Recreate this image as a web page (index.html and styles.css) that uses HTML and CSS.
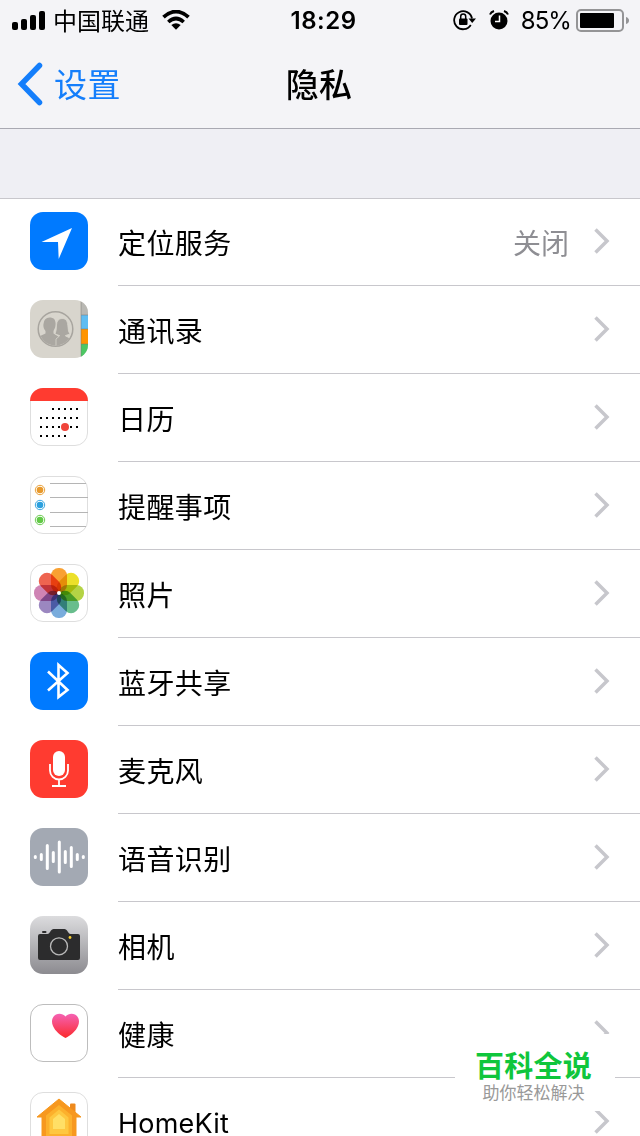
FILE: index.html
```html
<!DOCTYPE html>
<html lang="zh-CN">
<head>
  <meta charset="UTF-8">
  <meta name="viewport" content="width=device-width, initial-scale=1.0">
  <title>隐私</title>
  <link rel="stylesheet" href="styles.css">
</head>
<body>
<!-- Header: status bar + navigation -->
<header class="header">
  <div class="status-bar">
    <div class="status-left">
      <svg class="signal" width="34" height="22" viewBox="0 0 34 22">
        <rect x="0" y="13" width="6" height="8" rx="2"/>
        <rect x="9" y="10" width="6" height="11" rx="2"/>
        <rect x="18" y="6" width="6" height="15" rx="2"/>
        <rect x="27" y="2" width="6" height="19" rx="2"/>
      </svg>
      <span class="carrier">中国联通</span>
      <svg class="wifi" width="28" height="20" viewBox="0 0 28 20">
        <path d="M1.500 7.200Q14-4 26.500 7.200" fill="none" stroke="#000" stroke-width="3.800"/>
        <path d="M6.300 12Q14 5 21.700 12" fill="none" stroke="#000" stroke-width="3.600"/>
        <path d="M9.300 15Q14 11.500 18.700 15L14 19.700Z"/>
      </svg>
    </div>
    <div class="time">18:29</div>
    <div class="status-right">
      <svg class="lock" width="23" height="22" viewBox="0 0 23 22">
        <path d="M17.800 16A9 9 0 1 1 19 9.500" fill="none" stroke="#000" stroke-width="1.800"/>
        <path d="M15.500 9.500H23L19.200 14Z"/>
        <rect x="6" y="9.500" width="8.500" height="6.500" rx="1"/>
        <path d="M7.700 10V7.500a2.500 2.500 0 0 1 5 0V10" fill="none" stroke="#000" stroke-width="1.500"/>
      </svg>
      <svg class="alarm" width="20" height="20" viewBox="0 0 20 20">
        <circle cx="10" cy="11" r="8.500"/>
        <path d="M1 4.500Q2 2 5 1M19 4.500Q18 2 15 1" fill="none" stroke="#000" stroke-width="2"/>
        <path d="M10.500 5.500V11.500H6" fill="none" stroke="#fff" stroke-width="1.500"/>
      </svg>
      <span class="percent">85%</span>
      <svg class="battery" width="53" height="24" viewBox="0 0 53 24">
        <rect x="1" y="2" width="46" height="21" rx="4" fill="none" stroke="#949496" stroke-width="2"/>
        <rect x="4" y="5" width="34" height="15" rx="1"/>
        <path d="M50 9Q53 10 53 12.500T50 16Z" fill="#949496"/>
      </svg>
    </div>
  </div>
  <nav class="nav">
    <a class="back">
      <svg width="26" height="44" viewBox="0 0 26 44">
        <path d="M22.500 3.500L4.500 22L22.500 40.500" fill="none" stroke="#147efb" stroke-width="5.500" stroke-linecap="round" stroke-linejoin="miter"/>
      </svg>
      <span class="back-text">设置</span>
    </a>
    <h1 class="title">隐私</h1>
  </nav>
</header>

<!-- Settings list -->
<main class="list">
  <div class="row">
    <svg class="icon" viewBox="0 0 58 58">
      <rect width="58" height="58" rx="13" fill="#007aff"/>
      <path d="M42 16L11.500 30H28L28.700 47Z" fill="#fff"/>
    </svg>
    <div class="cell"><span class="label">定位服务</span><span class="value">关闭</span><svg class="chevron" viewBox="0 0 16 26"><path d="M1.500 1.500L13 13L1.500 24.500"/></svg></div>
  </div>

  <div class="row">
    <svg class="icon" viewBox="0 0 58 58">
      <defs>
        <clipPath id="tile"><rect width="58" height="58" rx="13"/></clipPath>
        <clipPath id="disc"><circle cx="25.500" cy="29" r="16.500"/></clipPath>
      </defs>
      <g clip-path="url(#tile)">
        <rect width="58" height="58" fill="#d8d5cd"/>
        <rect x="51" y="0" width="7" height="15" fill="#b9b8b3"/>
        <rect x="51" y="15" width="7" height="14" fill="#5fbdf2"/>
        <rect x="51" y="29" width="7" height="15" fill="#ff9500"/>
        <rect x="51" y="44" width="7" height="14" fill="#4cc763"/>
        <path d="M51 0V58M51 15H58M51 29H58M51 44H58" stroke="#77756f" stroke-width=".8" opacity=".6"/>
      </g>
      <circle cx="25.500" cy="29" r="17.300" fill="none" stroke="#a8a59f" stroke-width="1.500"/>
      <g clip-path="url(#disc)" fill="#aaa7a1">
        <path d="M19.500 17.500C24 17.500 26 20 25.500 25C25.500 28 24 29.500 23.500 31V33.500L29 37V48H8V37L15.500 33.500V31C14 29 13 27 13.500 24Q14 17.500 19.500 17.500Z"/>
        <path d="M32 18.500C37 18.500 37.500 22 38 27Q38 32 40 34L35.500 35.500V36L43 39.500V48H26V39L29.500 36V35.500L25 34Q26.500 31 26.500 25Q27 18.500 32 18.500Z" stroke="#d8d5cd" stroke-width=".8"/>
      </g>
    </svg>
    <div class="cell"><span class="label">通讯录</span><svg class="chevron" viewBox="0 0 16 26"><path d="M1.500 1.500L13 13L1.500 24.500"/></svg></div>
  </div>

  <div class="row">
    <svg class="icon" viewBox="0 0 58 58">
      <rect x=".5" y=".5" width="57" height="57" rx="12.500" fill="#fff" stroke="#dedede"/>
      <rect width="58" height="13" fill="#ff3b30" clip-path="url(#tile)"/>
      <g stroke="#000" stroke-width="2" stroke-dasharray="2 4">
        <path d="M22 21H48"/>
        <path d="M10 30H48"/>
        <path d="M10 39H48"/>
        <path d="M10 48H36"/>
      </g>
      <circle cx="35" cy="39" r="4" fill="#f0443a"/>
    </svg>
    <div class="cell"><span class="label">日历</span><svg class="chevron" viewBox="0 0 16 26"><path d="M1.500 1.500L13 13L1.500 24.500"/></svg></div>
  </div>

  <div class="row">
    <svg class="icon" viewBox="0 0 58 58">
      <rect x=".5" y=".5" width="57" height="57" rx="12.500" fill="#fff" stroke="#dedede"/>
      <path d="M20 7.500H56M20 21.500H58M20 36.500H58M20 50.500H56" stroke="#b5b5b5"/>
      <g fill="none">
        <circle cx="10" cy="14" r="4.700" stroke="#e9a13b"/><circle cx="10" cy="14" r="3.300" fill="#e8992b"/>
        <circle cx="10" cy="29" r="4.700" stroke="#3ba7e0"/><circle cx="10" cy="29" r="3.300" fill="#2ba0de"/>
        <circle cx="10" cy="44" r="4.700" stroke="#6ecb53"/><circle cx="10" cy="44" r="3.300" fill="#62c946"/>
      </g>
    </svg>
    <div class="cell"><span class="label">提醒事项</span><svg class="chevron" viewBox="0 0 16 26"><path d="M1.500 1.500L13 13L1.500 24.500"/></svg></div>
  </div>

  <div class="row">
    <svg class="icon" viewBox="0 0 58 58">
      <rect x=".5" y=".5" width="57" height="57" rx="12.500" fill="#fff" stroke="#dedede"/>
      <g class="petals">
        <rect x="21" y="4" width="16" height="24.500" rx="7.500" fill="#f9a132"/>
        <rect x="21" y="4" width="16" height="24.500" rx="7.500" fill="#ece02a" transform="rotate(45 29 29)"/>
        <rect x="21" y="4" width="16" height="24.500" rx="7.500" fill="#b4d345" transform="rotate(90 29 29)"/>
        <rect x="21" y="4" width="16" height="24.500" rx="7.500" fill="#68bd8c" transform="rotate(135 29 29)"/>
        <rect x="21" y="4" width="16" height="24.500" rx="7.500" fill="#79acdc" transform="rotate(180 29 29)"/>
        <rect x="21" y="4" width="16" height="24.500" rx="7.500" fill="#9b87c0" transform="rotate(225 29 29)"/>
        <rect x="21" y="4" width="16" height="24.500" rx="7.500" fill="#cf84b4" transform="rotate(270 29 29)"/>
        <rect x="21" y="4" width="16" height="24.500" rx="7.500" fill="#ee6450" transform="rotate(315 29 29)"/>
      </g>
      <circle cx="29" cy="29" r="2" fill="#fff"/>
    </svg>
    <div class="cell"><span class="label">照片</span><svg class="chevron" viewBox="0 0 16 26"><path d="M1.500 1.500L13 13L1.500 24.500"/></svg></div>
  </div>

  <div class="row">
    <svg class="icon" viewBox="0 0 58 58">
      <rect width="58" height="58" rx="13" fill="#007aff"/>
      <path d="M18 19.500L37.500 38L28.500 45V13L37.500 21L18 38.500" fill="none" stroke="#fff" stroke-width="2.600"/>
    </svg>
    <div class="cell"><span class="label">蓝牙共享</span><svg class="chevron" viewBox="0 0 16 26"><path d="M1.500 1.500L13 13L1.500 24.500"/></svg></div>
  </div>

  <div class="row">
    <svg class="icon" viewBox="0 0 58 58">
      <rect width="58" height="58" rx="13" fill="#ff3b30"/>
      <rect x="23" y="11" width="12" height="25" rx="6" fill="#fff"/>
      <path d="M20 24V30.500A9 9 0 0 0 38 30.500V24M29 39.500V46M22 46H36" fill="none" stroke="#fff" stroke-width="1.800"/>
    </svg>
    <div class="cell"><span class="label">麦克风</span><svg class="chevron" viewBox="0 0 16 26"><path d="M1.500 1.500L13 13L1.500 24.500"/></svg></div>
  </div>

  <div class="row">
    <svg class="icon" viewBox="0 0 58 58">
      <rect width="58" height="58" rx="13" fill="#a3a9b3"/>
      <path d="M5.300 28.500V29.500M11.300 26.500V31.500M17.300 17.500V40.500M23.300 24.500V33.500M29.300 14V44M35.300 23.500V34.500M41.300 19.500V38.500M47.300 26.500V31.500M53.300 28.500V29.500" stroke="#fff" stroke-width="3" stroke-linecap="round"/>
    </svg>
    <div class="cell"><span class="label">语音识别</span><svg class="chevron" viewBox="0 0 16 26"><path d="M1.500 1.500L13 13L1.500 24.500"/></svg></div>
  </div>

  <div class="row">
    <svg class="icon" viewBox="0 0 58 58">
      <defs>
        <linearGradient id="metal" x1="0" y1="0" x2="0" y2="1">
          <stop offset="0" stop-color="#dcdcde"/>
          <stop offset="1" stop-color="#8c8b90"/>
        </linearGradient>
      </defs>
      <rect width="58" height="58" rx="13" fill="url(#metal)"/>
      <path d="M10 18H17.500Q19 18 20 16L21 14.500Q22 13 23.500 13H34.500Q36 13 37 14.500L38 16Q39 18 40.500 18H48Q50 18 50 20V42Q50 44 48 44H10Q8 44 8 42V20Q8 18 10 18Z" fill="#2c2c2d"/>
      <rect x="12" y="15" width="4.500" height="2" rx="1" fill="#2c2c2d"/>
      <circle cx="29" cy="30.300" r="8.500" fill="none" stroke="#b9b9b9" stroke-width="1.300"/>
      <circle cx="40" cy="21.500" r="1.400" fill="#f7cd2e"/>
    </svg>
    <div class="cell"><span class="label">相机</span><svg class="chevron" viewBox="0 0 16 26"><path d="M1.500 1.500L13 13L1.500 24.500"/></svg></div>
  </div>

  <div class="row">
    <svg class="icon" viewBox="0 0 58 58">
      <defs>
        <linearGradient id="heart" x1="0" y1="0" x2="0" y2="1">
          <stop offset="0" stop-color="#f562b4"/>
          <stop offset="1" stop-color="#fb2a2c"/>
        </linearGradient>
      </defs>
      <rect x=".5" y=".5" width="57" height="57" rx="12.500" fill="#fff" stroke="#bdbdbd"/>
      <path d="M35.500 12.500C38 9.500 42 9 45 10.500C49 12.800 50 17.500 48 22C46 27 40.500 31.500 35.500 34C30.500 31.500 25 27 23 22C21 17.500 22 12.800 26 10.500C29 9 33 9.500 35.500 12.500Z" fill="url(#heart)"/>
    </svg>
    <div class="cell"><span class="label">健康</span><svg class="chevron" viewBox="0 0 16 26"><path d="M1.500 1.500L13 13L1.500 24.500"/></svg></div>
  </div>

  <div class="row">
    <svg class="icon" viewBox="0 0 58 58">
      <rect x=".5" y=".5" width="57" height="57" rx="12.500" fill="#fff" stroke="#dedede"/>
      <path d="M40 20V12.500Q40 11.500 41 11.500H44.500Q45.500 11.500 45.500 12.500V22Z" fill="#ee8a1d"/>
      <path d="M29 7L51 25H46V50H12V25H7Z" fill="#f7981f" stroke="#f7981f" stroke-linejoin="round"/>
      <path d="M29 13L42 23.500V46H16V23.500Z" fill="#fcb02c"/>
      <path d="M29 17.500L38.500 25.500V42H19.500V25.500Z" fill="#fec740"/>
      <path d="M29 22L35 27V37H23V27Z" fill="#ffdf66"/>
    </svg>
    <div class="cell"><span class="label latin">HomeKit</span><svg class="chevron" viewBox="0 0 16 26"><path d="M1.500 1.500L13 13L1.500 24.500"/></svg></div>
  </div>
</main>

<!-- Badge over the last rows -->
<div class="badge">
  <div class="badge-name">百科全说</div>
  <div class="badge-slogan">助你轻松解决</div>
</div>
</body>
</html>
```
FILE: styles.css
```css
html, body {
  margin: 0;
  padding: 0;
}

body {
  position: relative;
  width: 640px;
  height: 1136px;
  overflow: hidden;
  background: #efeff4;
  color: #000;
  font-family: Inter, "Noto Sans CJK SC", sans-serif;
}

svg {
  display: block;
  flex: none;
}

/* Header */
.header {
  height: 128px;
  background: #f4f4f7;
  border-bottom: 1px solid #a9a9b2;
}

.status-bar {
  display: grid;
  grid-template-columns: 1fr auto 1fr;
  align-items: center;
  height: 40px;
  padding: 0 11px 0 12px;
  font-size: 24px;
  line-height: 40px;
}

.status-left, .status-right {
  display: flex;
  align-items: center;
}

.status-right {
  justify-content: flex-end;
}

.carrier {
  margin: 0 13px 0 7px;
  padding-top: 3px;
  line-height: 37px;
}

.time {
  padding: 2px 0 0 6px;
  font-weight: 600;
  letter-spacing: 0.5px;
  line-height: 38px;
}

.alarm {
  margin: 0 12px 0 13px;
}

.percent {
  margin-right: 5px;
  padding-top: 2px;
  letter-spacing: -0.9px;
  line-height: 38px;
}

/* Navigation */
.nav {
  display: grid;
  grid-template-columns: 1fr auto 1fr;
  align-items: center;
  height: 88px;
  padding: 0 17px;
}

.back {
  display: flex;
  align-items: center;
  gap: 11px;
  color: #147efb;
  font-size: 33px;
}

.back-text {
  padding-top: 3px;
  letter-spacing: 0.5px;
  line-height: 85px;
}

.title {
  margin: 0;
  padding: 3px 2px 0 0;
  font-size: 33px;
  font-weight: 500;
  letter-spacing: 0.3px;
  line-height: 85px;
}

/* List */
.list {
  margin-top: 69px;
  background: #fff;
  box-shadow: inset 0 1px #c8c7cc;
}

.row {
  display: flex;
  height: 88px;
  padding-left: 30px;
  gap: 30px;
}

.icon {
  width: 58px;
  height: 58px;
  margin-top: 14px;
}

.petals rect {
  mix-blend-mode: multiply;
}

.cell {
  display: flex;
  flex: 1;
  align-items: center;
  box-sizing: border-box;
  padding-right: 30px;
  border-bottom: 1px solid #c8c7cc;
  font-size: 28px;
  line-height: 81px;
}

.label {
  flex: 1;
  padding-top: 6px;
  letter-spacing: 0.4px;
}

.latin {
  padding-top: 4px;
  font-size: 27px;
  letter-spacing: 0.2px;
}

.value {
  margin-right: 25px;
  padding-top: 6px;
  color: #8e8e93;
}

.chevron {
  width: 16px;
  height: 26px;
  margin-bottom: 2px;
  fill: none;
  stroke: #c7c7cc;
  stroke-width: 3.5;
}

/* Badge */
.badge {
  position: absolute;
  left: 455px;
  top: 1034px;
  width: 160px;
  height: 77px;
  background: #fff;
  text-align: center;
}

.badge-name {
  padding: 16px 3px 0 0;
  color: #0fc63c;
  font-size: 29px;
  font-weight: 700;
  letter-spacing: 0.3px;
  line-height: 34px;
}

.badge-slogan {
  padding-right: 3px;
  color: #999;
  font-size: 17px;
  line-height: 19px;
}
```
